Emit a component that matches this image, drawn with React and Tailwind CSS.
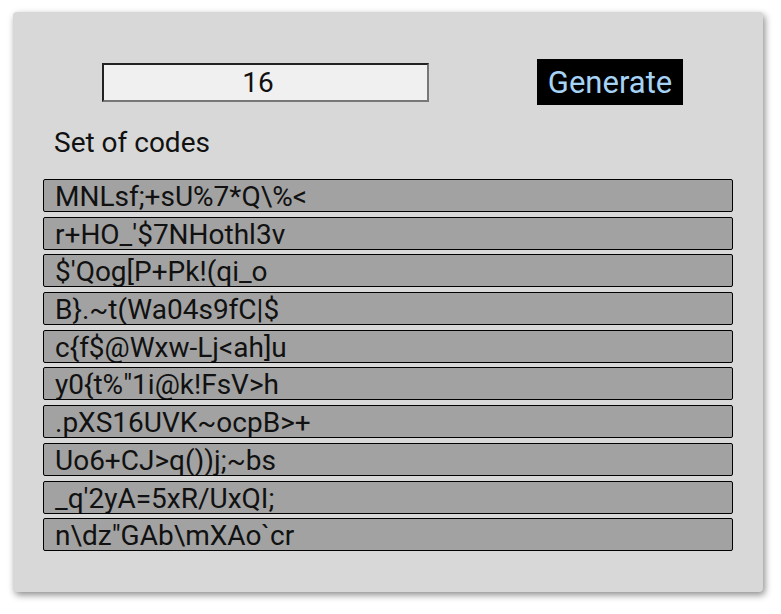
import React from "react";

const codes = [
  "MNLsf;+sU%7*Q\\%<",
  "r+HO_'$7NHothl3v",
  "$'Qog[P+Pk!(qi_o",
  "B}.~t(Wa04s9fC|$",
  "c{f$@Wxw-Lj<ah]u",
  'y0{t%"1i@k!FsV>h',
  ".pXS16UVK~ocpB>+",
  "Uo6+CJ>q())j;~bs",
  "_q'2yA=5xR/UxQI;",
  'n\\dz"GAb\\mXAo`cr',
];

export default function App() {
  return (
    <div className="w-[781px] h-[614px] bg-white overflow-hidden pt-[12px] pl-[13px]" style={{ fontFamily: "Roboto, sans-serif" }}>
      <div className="w-[750px] h-[580px] bg-[#d8d8d8] rounded-[4px] shadow-[2px_3px_7px_rgba(0,0,0,0.45)] flex flex-col">
        <div className="flex items-center pt-[47px]">
          <div className="ml-[89px] w-[327px] h-[39px] bg-[#f0f0f0] border-2 border-t-[#222] border-l-[#222] border-b-[#777] border-r-[#777] flex items-center justify-center pr-[15px] pt-[2px] text-[28px] text-[#111]">
            16
          </div>
          <div className="ml-[108px] w-[146px] h-[46px] bg-black flex items-center justify-center pt-[2px] text-[31px] text-[#a6d3f5]">
            Generate
          </div>
        </div>
        <div className="mt-[21px] pl-[41px] text-[28px] leading-[33px] text-[#111]">Set of codes</div>
        <div className="mt-[20px] ml-[30px] w-[690px] flex flex-col gap-[4.7px]">
          {codes.map((c, i) => (
            <div
              key={i}
              className="h-[33px] bg-[#a2a2a2] border border-black rounded-[2px] pl-[11px] text-[28px] leading-[33px] text-[#111] overflow-hidden whitespace-pre"
            >
              {c}
            </div>
          ))}
        </div>
      </div>
    </div>
  );
}
